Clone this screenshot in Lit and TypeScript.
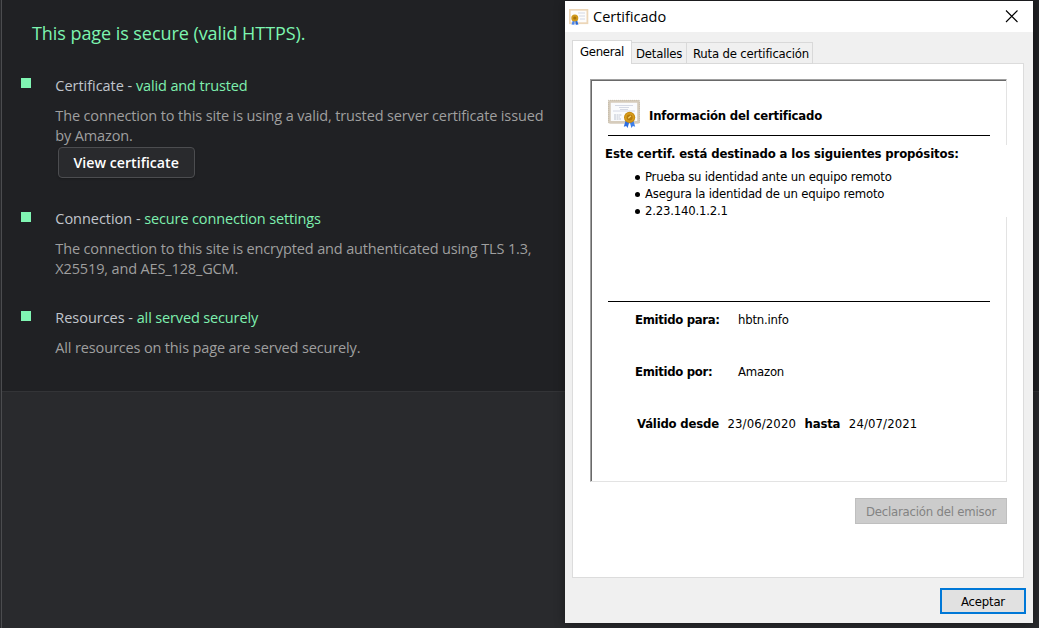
import { LitElement, html, svg, css, nothing } from "lit";

interface Finding {
  label: string;
  status: string;
  text: string;
  action?: string;
}

const findings: Finding[] = [
  {
    label: "Certificate",
    status: "valid and trusted",
    text: "The connection to this site is using a valid, trusted server certificate issued by Amazon.",
    action: "View certificate",
  },
  {
    label: "Connection",
    status: "secure connection settings",
    text: "The connection to this site is encrypted and authenticated using TLS 1.3, X25519, and AES_128_GCM.",
  },
  {
    label: "Resources",
    status: "all served securely",
    text: "All resources on this page are served securely.",
  },
];

class SecurityPanel extends LitElement {
  static styles = css`
    :host {
      display: flex;
      flex-direction: column;
      box-sizing: border-box;
      height: 100%;
      border-left: 1px solid #4b4c4f;
      background: #292a2d;
      font: 14.5px/20px "Open Sans", "Noto Sans", sans-serif;
      letter-spacing: -0.14px;
      color: #9f9f9f;
    }
    .report {
      box-sizing: border-box;
      height: 392px;
      padding: 21px 0 0 19px;
      background: #202124;
      border-bottom: 1px solid #333437;
    }
    .summary {
      margin: 0 0 31px 11px;
      font-size: 18px;
      font-weight: 400;
      line-height: 24px;
      letter-spacing: -0.06px;
      color: #7df5b0;
    }
    .finding {
      display: flex;
      gap: 24.3px;
      margin-bottom: 29px;
    }
    .marker {
      flex: none;
      width: 10px;
      height: 10px;
      margin-top: 3px;
      background: #80f6b3;
    }
    .first .marker {
      margin-top: 2px;
    }
    .body {
      width: 492px;
    }
    .title {
      margin-bottom: 10px;
      color: #c0c5cc;
    }
    .label {
      letter-spacing: -0.03px;
    }
    .status {
      color: #7ef0af;
    }
    .action {
      display: block;
      box-sizing: border-box;
      width: 137px;
      height: 31px;
      margin: 1px 0 2px 2.4px;
      padding: 0;
      border: 1px solid #4c4d50;
      border-radius: 4px;
      background: #292a2d;
      box-shadow: 0 1px 2px rgba(0, 0, 0, 0.2);
      color: #fff;
      font: 600 14.2px/28px "Open Sans", "Noto Sans", sans-serif;
    }
  `;

  render() {
    return html`<section class="report">
      <h1 class="summary">This page is secure (valid HTTPS).</h1>
      ${findings.map(
        (f, i) => html`<div class="finding ${i === 0 ? "first" : ""}">
          <span class="marker"></span>
          <div class="body">
            <div class="title"><span class="label">${f.label} - </span><span class="status">${f.status}</span></div>
            <div>${f.text}</div>
            ${f.action ? html`<button class="action">${f.action}</button>` : nothing}
          </div>
        </div>`
      )}
    </section>`;
  }
}
customElements.define("security-panel", SecurityPanel);

const seal = svg`
  <path d="M17.6 21.5l-1.8 6.2 2.4-.6 1.4 1.9 2-7z" fill="#2f6fe0" />
  <path d="M25.4 21.5l1.8 6.2-2.3-.6-1.5 1.9-1.9-7z" fill="#4080ea" />
  <circle cx="21.6" cy="18.4" r="5.6" fill="#c68a10" />
  <circle cx="21.6" cy="18.4" r="4.6" fill="#d79c1c" />
  <circle cx="21.6" cy="18.4" r="3" fill="#b87c0c" />
  <path d="M20.3 19.3l2.6-2.4" stroke="#f7d775" stroke-width="1.2" />`;

class CertificateDialog extends LitElement {
  static styles = css`
    :host {
      display: flex;
      flex-direction: column;
      box-sizing: border-box;
      background: #f0f0f0;
      color: #000;
      font: 13px/17px "DejaVu Sans Condensed", "DejaVu Sans", sans-serif;
      letter-spacing: -0.2px;
      white-space: nowrap;
      box-shadow: 0 1px 10px rgba(0, 0, 0, 0.4);
    }
    .titlebar {
      display: flex;
      align-items: center;
      box-sizing: border-box;
      height: 31px;
      padding: 0 15px 0 4px;
      background: #fff;
      font: 14.5px/20px "Open Sans", "Noto Sans", sans-serif;
      letter-spacing: 0;
    }
    .caption {
      flex: 1;
      margin-left: 4px;
    }
    svg {
      display: block;
      flex: none;
    }
    .small {
      margin-top: 2px;
    }
    .close {
      margin-top: -1px;
    }
    .tabs {
      display: flex;
      align-items: flex-end;
      height: 24px;
      margin: 8px 0 -1px 7px;
      position: relative;
    }
    .tab {
      box-sizing: border-box;
      height: 22px;
      padding: 2px 0 0 6px;
      border: 1px solid #d9d9d9;
      border-left: 0;
    }
    .general {
      width: 60px;
      height: 24px;
      padding: 2px 0 0 7px;
      border-left: 1px solid #d9d9d9;
      border-bottom: 0;
      background: #fff;
      letter-spacing: -0.3px;
    }
    .details {
      width: 55px;
      padding-left: 4px;
    }
    .path {
      width: 126px;
      letter-spacing: -0.2px;
    }
    .sheet {
      display: flex;
      flex-direction: column;
      align-items: flex-end;
      box-sizing: border-box;
      width: 452px;
      height: 515px;
      margin-left: 7px;
      padding: 15px 16px 0 17px;
      border: 1px solid #dcdcdc;
      background: #fff;
    }
    .info {
      box-sizing: border-box;
      width: 417px;
      height: 403px;
      border: 1px solid #e3e3e3;
      border-top-color: #a0a0a0;
      border-left-color: #a0a0a0;
      box-shadow: inset 1px 1px #696969;
      padding: 1px 0 0 1px;
    }
    .heading {
      display: flex;
      gap: 9px;
      height: 36px;
      margin: 18px 16px 0 16px;
      border-bottom: 1px solid #000;
    }
    .heading b {
      margin-top: 8px;
    }
    b {
      letter-spacing: -0.18px;
    }
    .purposes {
      height: 72px;
      margin: 9px -1px 0 10px;
      padding-left: 3px;
      background: #fff;
    }
    .purposes b {
      display: block;
      letter-spacing: -0.11px;
    }
    ul {
      margin: 6px 0 0 30px;
      padding: 0;
      list-style: none;
    }
    li {
      display: flex;
      align-items: center;
      gap: 5px;
    }
    li::before {
      content: "";
      width: 5px;
      height: 5px;
      margin-top: 1px;
      border-radius: 50%;
      background: #000;
    }
    .rule {
      height: 1px;
      margin: 84px 16px 0 16px;
      background: #000;
    }
    .fields {
      display: grid;
      grid-template-columns: 103px 1fr;
      row-gap: 35px;
      margin: 9px 0 0 43px;
    }
    .fields b {
      letter-spacing: -0.32px;
    }
    .validity {
      grid-column: 1 / -1;
      display: flex;
      gap: 8.6px;
      padding-left: 2px;
      letter-spacing: 0.11px;
    }
    .validity b {
      letter-spacing: -0.2px;
    }
    button {
      box-sizing: border-box;
      height: 26px;
      padding: 1px 0 0;
      font: inherit;
      letter-spacing: inherit;
    }
    .issuer {
      width: 152px;
      margin-top: 16px;
      border: 1px solid #bfbfbf;
      background: #ccc;
      color: #838383;
    }
    .accept {
      width: 86px;
      margin: 10px 7px 0 auto;
      border: 2px solid #0078d7;
      background: #e1e1e1;
      color: #000;
    }
  `;

  render() {
    return html`
      <header class="titlebar">
        <svg class="small" width="20" height="17" viewBox="0 0 20 17">
          <rect x=".8" y=".8" width="17.6" height="13.4" fill="#fdfcfb" stroke="#ecd6b8" stroke-width="1.8" />
          <path d="M9 4h7M10 7h6M11 10h5" stroke="#e8eaf0" stroke-width="2" />
          <path d="M3.8 11l-1.2 4.8 1.8-.3.8.8L6 11z" fill="#4a86ee" />
          <path d="M6 11l.9 5.3.9-.8 1.6.3L8 11z" fill="#2868d8" />
          <circle cx="5.8" cy="9" r="3.5" fill="#d19a1c" />
          <circle cx="5.8" cy="9" r="1.6" fill="#a87208" />
        </svg>
        <span class="caption">Certificado</span>
        <svg class="close" width="13" height="13" viewBox="0 0 13 13">
          <path d="M1 .5l11.500 11.500M12.500 .5l-11.500 11.500" stroke="#000" stroke-width="1.1" />
        </svg>
      </header>
      <nav class="tabs">
        <div class="tab general">General</div>
        <div class="tab details">Detalles</div>
        <div class="tab path">Ruta de certificación</div>
      </nav>
      <div class="sheet">
        <div class="info">
          <div class="heading">
            <svg width="32" height="30" viewBox="0 0 32 30">
              <rect x="1.4" y="2.4" width="29.2" height="21" rx="1" fill="#fafbfd" stroke="#d6ccbc" stroke-width="2.8" />
              <path d="M0.6 1v23.4M31.4 1v23.4M0 1.3h32" stroke="#b9ae9d" stroke-width=".5" stroke-dasharray="1 1" />
              <path d="M7 6.5h18M11 8.5h10M5 12h22M12 10.5h8" stroke="#ccd1de" stroke-width=".8" />
              <path d="M6 16h8M6 18h6M6 20h7" stroke="#b6bccb" stroke-width=".9" stroke-dasharray="2 .6" />
              ${seal}
            </svg>
            <b>Información del certificado</b>
          </div>
          <div class="purposes">
            <b>Este certif. está destinado a los siguientes propósitos:</b>
            <ul>
              <li>Prueba su identidad ante un equipo remoto</li>
              <li>Asegura la identidad de un equipo remoto</li>
              <li>2.23.140.1.2.1</li>
            </ul>
          </div>
          <div class="rule"></div>
          <div class="fields">
            <b>Emitido para:</b><span>hbtn.info</span>
            <b>Emitido por:</b><span>Amazon</span>
            <div class="validity">
              <b>Válido desde</b><span>23/06/2020</span><b>hasta</b><span>24/07/2021</span>
            </div>
          </div>
        </div>
        <button class="issuer" disabled>Declaración del emisor</button>
      </div>
      <button class="accept">Aceptar</button>
    `;
  }
}
customElements.define("certificate-dialog", CertificateDialog);

class AppRoot extends LitElement {
  static styles = css`
    :host {
      display: block;
      position: relative;
      box-sizing: border-box;
      width: 1039px;
      height: 628px;
      padding-left: 1px;
      overflow: hidden;
      background: #292a2d;
    }
    .dialog {
      position: absolute;
      left: 565px;
      top: 1px;
      width: 468px;
      height: 622px;
    }
  `;

  render() {
    return html`
      <security-panel></security-panel>
      <certificate-dialog class="dialog"></certificate-dialog>
    `;
  }
}
customElements.define("app-root", AppRoot);
